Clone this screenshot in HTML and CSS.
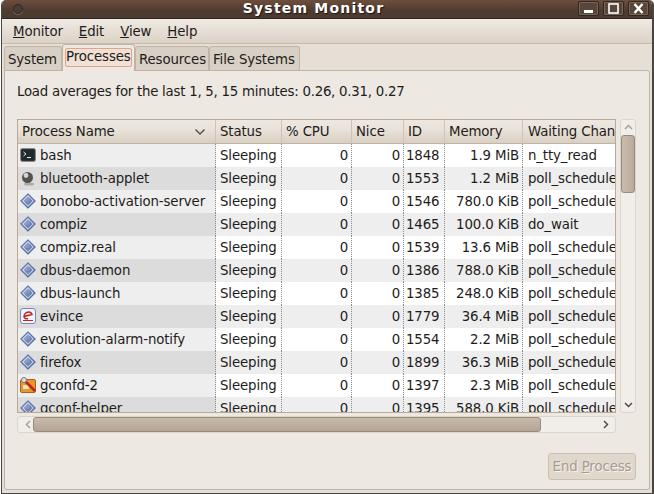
FILE: index.html
```html
<!DOCTYPE html>
<html lang="en">
<head>
<meta charset="utf-8">
<title>System Monitor</title>
<link rel="stylesheet" href="styles.css">
</head>
<body>
<svg class="defs" width="0" height="0" aria-hidden="true">
  <defs>
    <linearGradient id="dia" x1="0" y1="0" x2="1" y2="1">
      <stop offset="0" stop-color="#aebcdc"/><stop offset="1" stop-color="#5a6f9f"/>
    </linearGradient>
    <symbol id="i-diamond" viewBox="0 0 16 16">
      <path d="M8 .7 15.3 8 8 15.3.7 8Z" fill="url(#dia)" stroke="#3f5a9c"/>
      <path d="M8 2.8 13.2 8 8 13.2 2.8 8Z" fill="none" stroke="#e6ecf7" stroke-width=".8"/>
      <path d="M5.5 10 10.5 9V5.5" fill="none" stroke="#6d7fa8"/>
    </symbol>
  </defs>
</svg>
<div class="window">
  <header class="titlebar">
    <span class="win-dot"></span>
    <span class="win-title">System Monitor</span>
    <div class="win-btns">
      <span class="win-btn"><svg width="13" height="11" viewBox="0 0 13 11"><rect x="2" y="7" width="9" height="3" fill="#fff"/></svg></span>
      <span class="win-btn"><svg width="13" height="11" viewBox="0 0 13 11"><rect x="2" y="1" width="9" height="9" fill="none" stroke="#fff" stroke-width="1.6"/></svg></span>
      <span class="win-btn"><svg width="13" height="11" viewBox="0 0 13 11"><path d="M2.5 1 10.5 10M10.5 1 2.5 10" stroke="#fff" stroke-width="2.4"/></svg></span>
    </div>
  </header>
  <nav class="menubar">
    <span class="menu-item"><u>M</u>onitor</span>
    <span class="menu-item"><u>E</u>dit</span>
    <span class="menu-item"><u>V</u>iew</span>
    <span class="menu-item"><u>H</u>elp</span>
  </nav>
  <div class="tabs">
    <span class="tab tab-system">System</span>
    <span class="tab tab-active"><span class="tab-focus">Processes</span></span>
    <span class="tab tab-res">Resources</span>
    <span class="tab tab-fs">File Systems</span>
  </div>
  <main class="panel">
    <p class="load">Load averages for the last 1, 5, 15 minutes: 0.26, 0.31, 0.27</p>
    <div class="list-area">
      <div class="tree">
        <div class="row head">
          <div class="hcell hname">Process Name<svg class="sort" width="12" height="8" viewBox="0 0 12 8"><path d="M1.5 1.5 6 6l4.500-4.500" fill="none" stroke="#5a5046" stroke-width="1.500"/></svg></div>
          <div class="hcell">Status</div>
          <div class="hcell">% CPU</div>
          <div class="hcell">Nice</div>
          <div class="hcell">ID</div>
          <div class="hcell">Memory</div>
          <div class="hcell hlast">Waiting Chan</div>
        </div>
        <div class="body">
          <div class="row">
            <div class="cell name"><svg class="ico" width="16" height="16" viewBox="0 0 16 16"><rect x=".5" y="1.500" width="15" height="13" rx="2" fill="#2e3436" stroke="#888a85"/><rect x="2" y="3" width="12" height="10" fill="#20292b"/><path d="M3.500 5 6 7 3.500 9M7 10.500h4" fill="none" stroke="#eeeeec"/></svg>bash</div>
            <div class="cell">Sleeping</div><div class="cell num">0</div><div class="cell num">0</div><div class="cell id">1848</div><div class="cell num">1.9 MiB</div><div class="cell wait">n_tty_read</div>
          </div>
          <div class="row">
            <div class="cell name"><svg class="ico" width="16" height="16" viewBox="0 0 16 16"><ellipse cx="9" cy="14" rx="5" ry="1.500" fill="#aaa"/><circle cx="7.500" cy="7.500" r="5.500" fill="#55524e"/><circle cx="6" cy="5.500" r="2.400" fill="#d8d5d0"/></svg>bluetooth-applet</div>
            <div class="cell">Sleeping</div><div class="cell num">0</div><div class="cell num">0</div><div class="cell id">1553</div><div class="cell num">1.2 MiB</div><div class="cell wait">poll_schedule_timeout</div>
          </div>
          <div class="row">
            <div class="cell name"><svg class="ico" width="16" height="16"><use href="#i-diamond"/></svg>bonobo-activation-server</div>
            <div class="cell">Sleeping</div><div class="cell num">0</div><div class="cell num">0</div><div class="cell id">1546</div><div class="cell num">780.0 KiB</div><div class="cell wait">poll_schedule_timeout</div>
          </div>
          <div class="row">
            <div class="cell name"><svg class="ico" width="16" height="16"><use href="#i-diamond"/></svg>compiz</div>
            <div class="cell">Sleeping</div><div class="cell num">0</div><div class="cell num">0</div><div class="cell id">1465</div><div class="cell num">100.0 KiB</div><div class="cell wait">do_wait</div>
          </div>
          <div class="row">
            <div class="cell name"><svg class="ico" width="16" height="16"><use href="#i-diamond"/></svg>compiz.real</div>
            <div class="cell">Sleeping</div><div class="cell num">0</div><div class="cell num">0</div><div class="cell id">1539</div><div class="cell num">13.6 MiB</div><div class="cell wait">poll_schedule_timeout</div>
          </div>
          <div class="row">
            <div class="cell name"><svg class="ico" width="16" height="16"><use href="#i-diamond"/></svg>dbus-daemon</div>
            <div class="cell">Sleeping</div><div class="cell num">0</div><div class="cell num">0</div><div class="cell id">1386</div><div class="cell num">788.0 KiB</div><div class="cell wait">poll_schedule_timeout</div>
          </div>
          <div class="row">
            <div class="cell name"><svg class="ico" width="16" height="16"><use href="#i-diamond"/></svg>dbus-launch</div>
            <div class="cell">Sleeping</div><div class="cell num">0</div><div class="cell num">0</div><div class="cell id">1385</div><div class="cell num">248.0 KiB</div><div class="cell wait">poll_schedule_timeout</div>
          </div>
          <div class="row">
            <div class="cell name"><svg class="ico" width="16" height="16" viewBox="0 0 16 16"><rect x=".5" y=".5" width="15" height="15" rx="2.500" fill="#eef3fb" stroke="#6f8fc4"/><path d="M4 8.500 12 6.500C11 3.500 6.500 3 4.500 6.500 3 9.500 5.500 11.500 8 10.500" fill="none" stroke="#cc1f1a" stroke-width="1.500"/><path d="M3 12.500h10" stroke="#cc1f1a"/></svg>evince</div>
            <div class="cell">Sleeping</div><div class="cell num">0</div><div class="cell num">0</div><div class="cell id">1779</div><div class="cell num">36.4 MiB</div><div class="cell wait">poll_schedule_timeout</div>
          </div>
          <div class="row">
            <div class="cell name"><svg class="ico" width="16" height="16"><use href="#i-diamond"/></svg>evolution-alarm-notify</div>
            <div class="cell">Sleeping</div><div class="cell num">0</div><div class="cell num">0</div><div class="cell id">1554</div><div class="cell num">2.2 MiB</div><div class="cell wait">poll_schedule_timeout</div>
          </div>
          <div class="row">
            <div class="cell name"><svg class="ico" width="16" height="16"><use href="#i-diamond"/></svg>firefox</div>
            <div class="cell">Sleeping</div><div class="cell num">0</div><div class="cell num">0</div><div class="cell id">1899</div><div class="cell num">36.3 MiB</div><div class="cell wait">poll_schedule_timeout</div>
          </div>
          <div class="row">
            <div class="cell name"><svg class="ico" width="16" height="16" viewBox="0 0 16 16"><rect x=".5" y="2.500" width="15" height="13" rx="1.500" fill="#e8962e" stroke="#a8641a"/><rect x="3" y="8" width="6" height="4" fill="#f6e3bd"/><path d="M5 4 15 14" stroke="#c8201c" stroke-width="2.600"/><circle cx="4" cy="3" r="2.500" fill="#e4e4e0" stroke="#777"/></svg>gconfd-2</div>
            <div class="cell">Sleeping</div><div class="cell num">0</div><div class="cell num">0</div><div class="cell id">1397</div><div class="cell num">2.3 MiB</div><div class="cell wait">poll_schedule_timeout</div>
          </div>
          <div class="row">
            <div class="cell name"><svg class="ico" width="16" height="16"><use href="#i-diamond"/></svg>gconf-helper</div>
            <div class="cell">Sleeping</div><div class="cell num">0</div><div class="cell num">0</div><div class="cell id">1395</div><div class="cell num">588.0 KiB</div><div class="cell wait">poll_schedule_timeout</div>
          </div>
        </div>
      </div>
      <div class="vscroll">
        <svg class="arrow" width="9" height="6" viewBox="0 0 9 6"><path d="M1 5 4.500 1.500 8 5" fill="none" stroke="#a79c90" stroke-width="1.400"/></svg>
        <div class="vthumb"></div>
        <svg class="arrow arrow-end" width="9" height="6" viewBox="0 0 9 6"><path d="M1 1 4.500 4.500 8 1" fill="none" stroke="#4a443c" stroke-width="1.400"/></svg>
      </div>
      <div class="hscroll">
        <svg class="arrow" width="6" height="9" viewBox="0 0 6 9"><path d="M5 1 1.500 4.500 5 8" fill="none" stroke="#a79c90" stroke-width="1.400"/></svg>
        <div class="hthumb"></div>
        <svg class="arrow" width="6" height="9" viewBox="0 0 6 9"><path d="M1 1 4.500 4.500 1 8" fill="none" stroke="#4a443c" stroke-width="1.400"/></svg>
      </div>
    </div>
    <div class="actions">
      <span class="btn">End <u>P</u>rocess</span>
    </div>
  </main>
</div>
</body>
</html>
```
FILE: styles.css
```css
* { box-sizing: border-box; }
html, body { margin: 0; padding: 0; background: #fff; }
body { width: 654px; height: 494px; overflow: hidden; font-family: "DejaVu Sans", sans-serif; font-size: 13.33px; letter-spacing: -0.12px; color: #1e1c1a; }
.defs { position: absolute; }
.window { width: 653px; height: 494px; margin-left: 1px; display: flex; flex-direction: column; background: #e6dfd6; border-left: 1px solid #4a4540; border-right: 2px solid #4a4540; border-bottom: 1px solid #4a4540; border-radius: 5px 5px 0 0; overflow: hidden; }

.titlebar { flex: none; height: 19px; display: flex; align-items: flex-start; background: linear-gradient(#6e4e3d, #503c31 55%, #4b3a30); border-bottom: 1px solid #2f2722; }
.win-dot { width: 10px; height: 10px; margin: 4px 0 0 11px; border-radius: 50%; background: #4a3d35; border: 1px solid #2e2620; box-shadow: 0 1px 0 #7b6a5e; }
.win-title { flex: 1; margin-left: 10px; padding-left: 16px; text-align: center; color: #fff; font-weight: bold; font-size: 14px; letter-spacing: 1.2px; line-height: 17px; text-shadow: 1px 1px 1px #1c1410; white-space: nowrap; }
.win-btns { display: flex; gap: 4px; padding: 1px 3px 0 0; }
.win-btn { width: 21px; height: 15px; display: flex; align-items: center; justify-content: center; border: 1px solid #2f2722; border-radius: 2px; box-shadow: inset 0 0 0 1px #7b675a; background: #59453a; }

.menubar { flex: none; height: 25px; display: flex; align-items: center; gap: 16px; padding: 0 0 0 11px; background: linear-gradient(#efeae3, #dcd2c7); border-bottom: 1px solid #c8b9aa; }
.menu-item { line-height: 24px; padding-top: 1px; }

.tabs { flex: none; height: 26px; display: flex; align-items: flex-end; padding-left: 2px; background: #e6dfd6; }
.tab { height: 24px; padding: 4px 3px 0; line-height: 17px; background: #d9d0c5; border: 1px solid #c2b4a5; border-bottom: 0; border-radius: 3px 3px 0 0; white-space: nowrap; }
.tab-system { width: 58px; }
.tab-active { width: 73px; padding: 3px 2px 0; background: #ede8e2; position: relative; z-index: 1; margin-bottom: -1px; height: 27px; }
.tab-focus { display: block; height: 19px; padding: 0; line-height: 16px; border: 1px solid #e2a58c; border-radius: 2px; background: #f0e0d6; }
.tab-res { width: 74px; }
.tab-fs { width: 91px; }

.panel { flex: 1; min-height: 0; margin: 0 2px 3px 2px; padding: 0 10px 0 12px; display: flex; flex-direction: column; background: #ede8e2; border: 1px solid #c2b4a5; border-radius: 0 3px 3px 3px; }
.load { margin: 0; padding-top: 12px; height: 48px; line-height: 17px; letter-spacing: -0.25px; white-space: nowrap; }

.list-area { display: grid; grid-template-columns: 599px 16px; grid-template-rows: 294px 17px; column-gap: 4px; row-gap: 3px; }
.tree { border: 1px solid #b8a999; overflow: hidden; background: #fff; display: flex; flex-direction: column; }
.row { display: grid; grid-template-columns: 198px 66px 70px 52px 41px 78px 300px; height: 23px; }
.head { flex: none; height: 24px; background: linear-gradient(#eee8e1, #e9e2d9 40%, #d9cfc3); border-bottom: 1px solid #c3b5a6; }
.hcell { display: flex; align-items: center; justify-content: space-between; padding: 1px 4px 0; line-height: 16px; white-space: nowrap; position: relative; border-right: 1px solid #cfc4b7; background-clip: padding-box; }
.hname { padding-right: 9px; }
.hlast { border-right: 0; padding-left: 5px; }
.sort { flex: none; }
.body { flex: 1; min-height: 0; overflow: hidden; }
.body .row:nth-child(odd) { background: #fff; }
.body .row:nth-child(even) { background: #eeeeee; }
.cell { padding: 1px 4px 0; line-height: 22px; white-space: nowrap; border-right: 1px dotted #8a8a8a; }
.cell:last-child { border-right: 0; padding-left: 5px; }
.name { background: #eeeeee; display: flex; align-items: center; padding: 1px 0 0 2px; gap: 4px; }
.body .row:nth-child(even) .name { background: #dcdcdc; }
.ico { flex: none; margin-bottom: 2px; }
.num { text-align: right; padding-right: 3px; }
.id { padding: 1px 3px 0 2px; }

.vscroll { display: flex; flex-direction: column; align-items: center; padding: 4px 0; background: #f1ede8; border: 1px solid #ddd5cc; border-radius: 3px; }
.vthumb { width: 14px; height: 58px; margin-top: 5px; background: linear-gradient(90deg, #cabcad, #b9aa9b); border: 1px solid #978b7e; border-radius: 3px; }
.arrow { flex: none; }
.arrow-end { margin-top: auto; }
.hscroll { display: flex; align-items: center; justify-content: flex-start; padding: 0 6px 0 7px; background: #f1ede8; border: 1px solid #ddd5cc; border-radius: 3px; }
.hscroll .arrow:last-child { margin-left: auto; }
.hthumb { width: 508px; height: 15px; margin-left: 2px; background: linear-gradient(#c9bbac, #b3a496); border: 1px solid #978b7e; border-radius: 3px; }

.actions { display: flex; justify-content: flex-end; padding: 20px 0 0; margin-right: 3px; }
.btn { width: 88px; height: 27px; line-height: 25px; text-align: center; color: #a69b8f; text-shadow: 1px 1px 0 #f6f2ed; background: #e0d7cd; border: 1px solid #cbbfb2; border-radius: 3px; white-space: nowrap; }
```
